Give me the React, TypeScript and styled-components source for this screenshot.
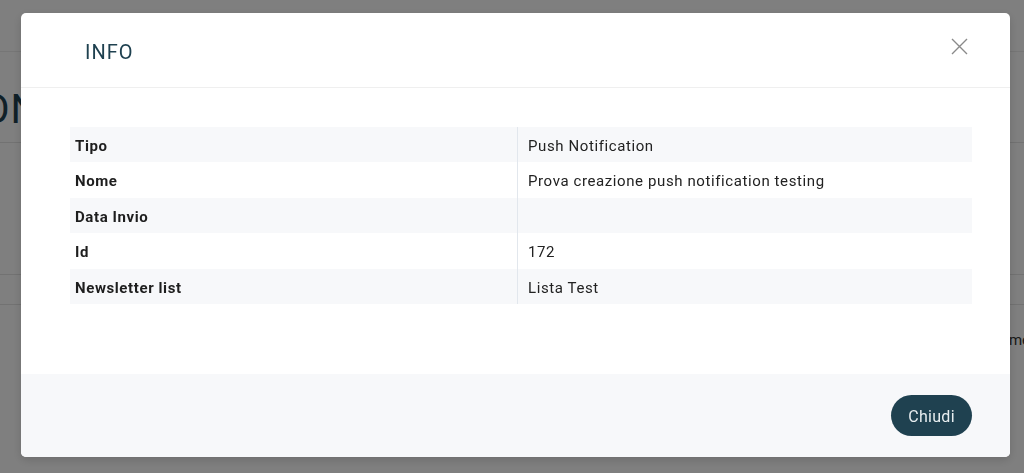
import styled, { createGlobalStyle } from "styled-components";

const GlobalStyle = createGlobalStyle`
  html, body {
    margin: 0;
    padding: 0;
    overflow: hidden;
  }
  body {
    font-family: Roboto, "Liberation Sans", sans-serif;
    background: #ffffff;
  }
`;

const Page = styled.div`
  width: 1024px;
  height: 473px;
  overflow: hidden;
  background: #ffffff;
`;

const TopBar = styled.div`
  height: 52px;
  border-bottom: 1px solid #ececec;
  box-sizing: border-box;
`;

const TitleBar = styled.div`
  height: 91px;
  display: flex;
  align-items: flex-end;
  padding-bottom: 12px;
  border-bottom: 1px solid #e4e4e4;
  box-sizing: border-box;
`;

const PageTitle = styled.h1`
  margin: 0 0 0 -18px;
  font-size: 40px;
  line-height: 40px;
  font-weight: 400;
  color: #1f4150;
  letter-spacing: 1px;
`;

const Section = styled.div<{ $h: number }>`
  height: ${(p) => p.$h}px;
  border-bottom: 1px solid #e4e4e4;
  box-sizing: border-box;
`;

const BgRow = styled.div`
  display: flex;
  justify-content: flex-end;
  padding-top: 26px;
  font-size: 15px;
  color: #333;
  margin-right: -6px;
`;

const Overlay = styled.div`
  position: fixed;
  inset: 0;
  background: rgba(0, 0, 0, 0.5);
`;

const Modal = styled.div`
  position: fixed;
  top: 13px;
  left: 21px;
  width: 989px;
  height: 444px;
  background: #ffffff;
  border-radius: 5px;
  box-shadow: 0 3px 10px rgba(0, 0, 0, 0.15);
  display: flex;
  flex-direction: column;
  overflow: hidden;
`;

const Header = styled.div`
  height: 75px;
  box-sizing: border-box;
  border-bottom: 1px solid #efefef;
  display: flex;
  align-items: center;
  justify-content: space-between;
  padding: 4px 41px 0 64px;
`;

const HeaderTitle = styled.h2`
  margin: 0;
  font-size: 20px;
  font-weight: 400;
  letter-spacing: 1px;
  color: #1f4150;
`;

const CloseButton = styled.button`
  border: none;
  background: none;
  padding: 0;
  width: 20px;
  height: 20px;
  display: flex;
  align-items: center;
  justify-content: center;
  margin-bottom: 12px;
  cursor: pointer;
`;

const Body = styled.div`
  flex: 1;
  padding: 39px 38px 0 49px;
`;

const Table = styled.div`
  display: grid;
  grid-template-columns: 448px 1fr;
`;

const Row = styled.div<{ $striped: boolean }>`
  display: contents;
  & > div {
    background: ${(p) => (p.$striped ? "#f7f8fa" : "#ffffff")};
  }
`;

const Label = styled.div`
  height: 35.4px;
  box-sizing: border-box;
  padding: 3px 0 0 5px;
  line-height: 33px;
  font-size: 15px;
  font-weight: 700;
  letter-spacing: 0.6px;
  color: #1e1e1e;
  border-right: 1px solid #e2e7ed;
`;

const Value = styled.div`
  height: 35.4px;
  box-sizing: border-box;
  padding: 3px 0 0 10px;
  line-height: 33px;
  font-size: 15px;
  letter-spacing: 0.6px;
  color: #222;
`;

const Footer = styled.div`
  height: 83px;
  background: #f7f8fa;
  display: flex;
  align-items: center;
  justify-content: flex-end;
  padding: 0 38px 0 0;
`;

const PrimaryButton = styled.button`
  width: 81px;
  height: 41px;
  border: none;
  border-radius: 21px;
  background: #1f4150;
  color: #e8eef0;
  font-family: Roboto, "Liberation Sans", sans-serif;
  font-size: 16px;
  letter-spacing: 0.3px;
  padding-top: 2px;
  cursor: pointer;
`;

const rows = [
  { label: "Tipo", value: "Push Notification" },
  { label: "Nome", value: "Prova creazione push notification testing" },
  { label: "Data Invio", value: "" },
  { label: "Id", value: "172" },
  { label: "Newsletter list", value: "Lista Test" },
];

export default function App() {
  return (
    <>
      <GlobalStyle />
      <Page>
        <TopBar />
        <TitleBar>
          <PageTitle>ON</PageTitle>
        </TitleBar>
        <Section $h={132} />
        <Section $h={30} />
        <BgRow>me</BgRow>
      </Page>
      <Overlay />
      <Modal>
        <Header>
          <HeaderTitle>INFO</HeaderTitle>
          <CloseButton aria-label="close">
            <svg width="17" height="17" viewBox="0 0 17 17">
              <path d="M1 1L16 16M16 1L1 16" stroke="#8a8a8a" strokeWidth="1.4" fill="none" />
            </svg>
          </CloseButton>
        </Header>
        <Body>
          <Table>
            {rows.map((r, i) => (
              <Row key={r.label} $striped={i % 2 === 0}>
                <Label>{r.label}</Label>
                <Value>{r.value}</Value>
              </Row>
            ))}
          </Table>
        </Body>
        <Footer>
          <PrimaryButton>Chiudi</PrimaryButton>
        </Footer>
      </Modal>
    </>
  );
}
